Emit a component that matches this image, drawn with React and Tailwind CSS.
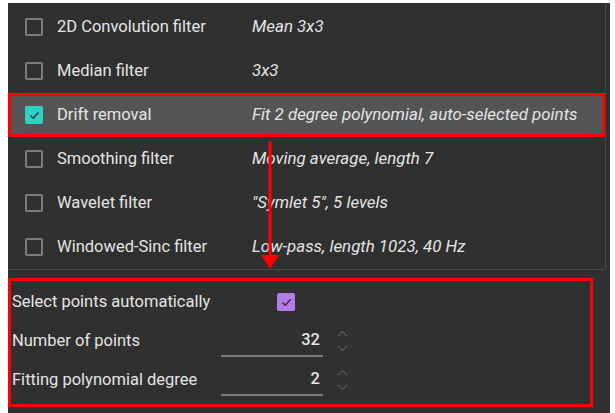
import React from "react"

const filters = [
	{ name: "2D Convolution filter", desc: "Mean 3x3" },
	{ name: "Median filter", desc: "3x3" },
	{ name: "Drift removal", desc: "Fit 2 degree polynomial, auto-selected points", on: true },
	{ name: "Smoothing filter", desc: "Moving average, length 7" },
	{ name: "Wavelet filter", desc: "\"Symlet 5\", 5 levels" },
	{ name: "Windowed-Sinc filter", desc: "Low-pass, length 1023, 40 Hz" },
]

const Check = ({ className }) => (
	<svg className={className} viewBox="0 0 24 24" fill="none" stroke="currentColor" strokeWidth="2.4" strokeLinecap="round" strokeLinejoin="round">
		<path d="M6 12.5l4 4 8-9" />
	</svg>
)

const Spinner = () => (
	<div className="ml-[14px] flex flex-col items-center gap-[8px] text-[#5a5a5a]">
		<svg className="w-[11px] h-[7px]" viewBox="0 0 11 7" fill="none" stroke="currentColor" strokeWidth="1.2">
			<path d="M1 6l4.5-4.5L10 6" />
		</svg>
		<svg className="w-[11px] h-[7px]" viewBox="0 0 11 7" fill="none" stroke="currentColor" strokeWidth="1.2">
			<path d="M1 1l4.5 4.5L10 1" />
		</svg>
	</div>
)

const NumberField = ({ label, value, rowClass }) => (
	<div className={"flex items-center " + rowClass}>
		<div className="w-[209px]">{label}</div>
		<div className="w-[102px] h-[31px] flex items-center justify-end pr-[3px] border-b-2 border-[#7a7a7a] font-medium">
			{value}
		</div>
		<Spinner />
	</div>
)

export default function App() {
	return (
		<div className="min-h-screen bg-white pl-2 pt-[3px]" style={{ fontFamily: "Roboto, 'Noto Sans', sans-serif" }}>
			<div className="relative w-[602px] h-[410px] bg-[#303030] text-[16.5px] text-[#e4e4e4]">

				{/* Filter list */}
				<div className="w-[598px] pt-[2px] border-r border-b border-[#474747]">
					{filters.map(f => (
						<div
							key={f.name}
							className={
								"h-[44px] flex items-center pl-[17px] " +
								(f.on ? "bg-[#555555] ring-[3px] ring-inset ring-[#ff0000]" : "")
							}
						>
							{f.on ? (
								<div className="w-[18px] h-[18px] rounded-[2px] bg-[#2dd1c2] flex items-center justify-center text-[#2f3f3d]">
									<Check className="w-[15px] h-[15px]" />
								</div>
							) : (
								<div className="w-[18px] h-[18px] rounded-[2px] border-2 border-[#7c7c7c]" />
							)}
							<div className="ml-[14px] w-[195px]">{f.name}</div>
							<div className="italic text-[16.9px]">{f.desc}</div>
						</div>
					))}
				</div>

				{/* Drift removal settings */}
				<div className="mt-[8px] w-[585px] border-[3px] border-[#ff0000] pl-[1px] pb-[3px]">
					<div className="h-[42px] flex items-center">
						<div className="w-[265px]">Select points automatically</div>
						<div className="w-[18px] h-[18px] rounded-[2px] bg-[#b47ee9] flex items-center justify-center text-[#3a2f45]">
							<Check className="w-[15px] h-[15px]" />
						</div>
					</div>
					<NumberField label="Number of points" value="32" rowClass="h-[36px]" />
					<NumberField label="Fitting polynomial degree" value="2" rowClass="h-[42px]" />
				</div>

				{/* Arrow */}
				<svg className="absolute left-[253px] top-[138px] w-[18px] h-[128px]" viewBox="0 0 18 128" fill="#ff0000">
					<rect x="7.5" y="0" width="3" height="118" />
					<path d="M0 114h18l-9 14z" />
				</svg>
			</div>
		</div>
	)
}
